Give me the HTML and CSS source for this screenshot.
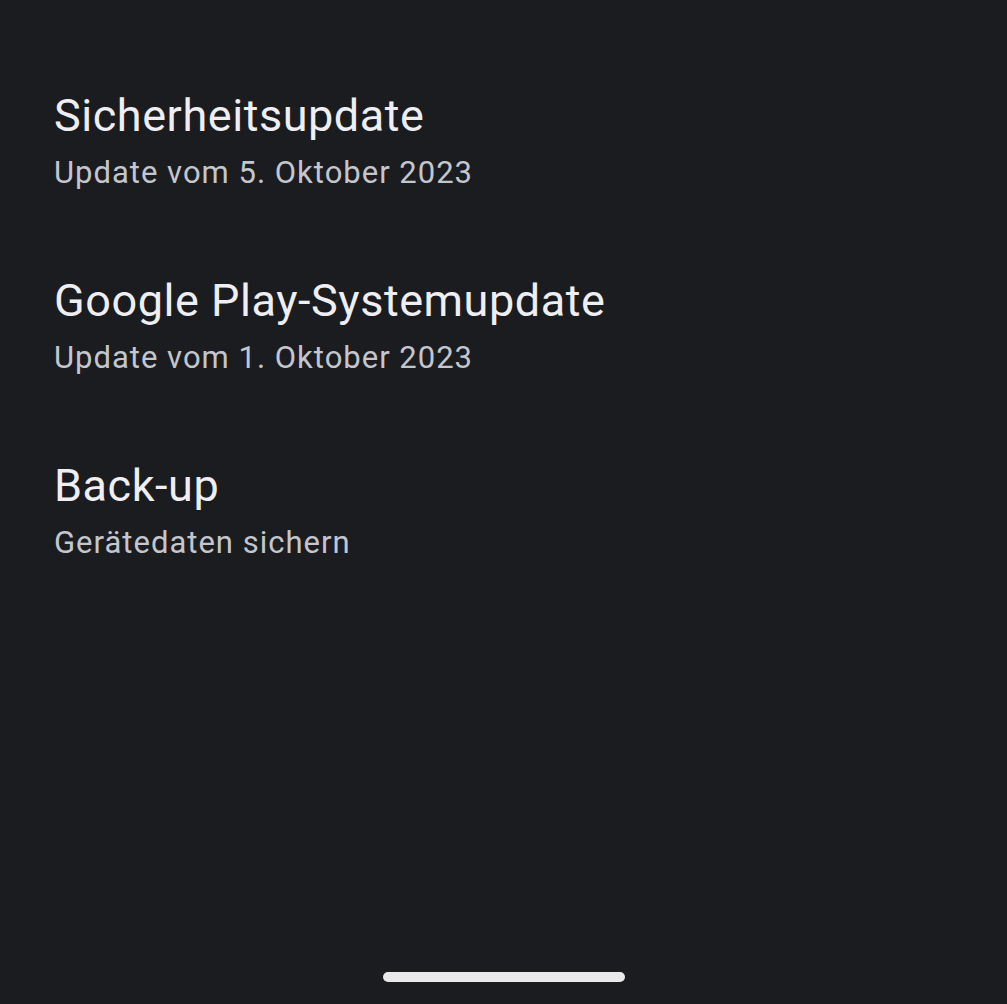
FILE: index.html
```html
<!DOCTYPE html>
<html lang="de">
<head>
  <meta charset="UTF-8">
  <title>System</title>
  <link rel="stylesheet" href="styles.css">
</head>
<body>

  <!-- Liste -->
  <div class="liste">
    <div class="eintrag">
      <div class="titel">Sicherheitsupdate</div>
      <div class="untertitel">Update vom 5. Oktober 2023</div>
    </div>
    <div class="eintrag">
      <div class="titel">Google Play-Systemupdate</div>
      <div class="untertitel">Update vom 1. Oktober 2023</div>
    </div>
    <div class="eintrag">
      <div class="titel">Back-up</div>
      <div class="untertitel">Gerätedaten sichern</div>
    </div>
  </div>

  <!-- Gestenleiste -->
  <div class="gesten">
    <div class="balken"></div>
  </div>

</body>
</html>
```

FILE: styles.css
```css
html, body {
  margin: 0;
  padding: 0;
  background: #1b1c20;
  height: 100%;
}

body {
  display: flex;
  flex-direction: column;
  font-family: Roboto, "Noto Sans", sans-serif;
}

.liste {
  flex: 1;
  padding: 90px 54px 0;
}

.eintrag {
  height: 185px;
}

.titel {
  color: #eeeef3;
  font-size: 45px;
  line-height: 52px;
  letter-spacing: 0.55px;
}

.untertitel {
  margin-top: 11px;
  color: #c4c6cd;
  font-size: 31px;
  line-height: 40px;
  letter-spacing: 1px;
}

.gesten {
  display: flex;
  justify-content: center;
  padding-bottom: 22px;
}

.balken {
  width: 242px;
  height: 10px;
  border-radius: 5px;
  background: #e9e9ea;
}
```
